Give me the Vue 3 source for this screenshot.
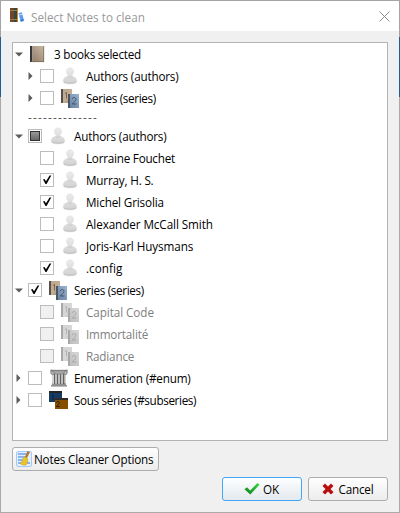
<script setup>
const rows = [
  { text: '3 books selected', level: 0, arrow: 'down', icon: 'book', fit: -0.24 },
  { text: 'Authors (authors)', level: 1, arrow: 'right', check: 'off', icon: 'person' },
  { text: 'Series (series)', level: 1, arrow: 'right', check: 'off', icon: 'series', fit: -0.32 },
  { text: '--------------', separator: true },
  { text: 'Authors (authors)', level: 0, arrow: 'down', check: 'partial', icon: 'person' },
  { text: 'Lorraine Fouchet', level: 1, check: 'off', icon: 'person', fit: -0.23 },
  { text: 'Murray, H. S.', level: 1, check: 'on', icon: 'person' },
  { text: 'Michel Grisolia', level: 1, check: 'on', icon: 'person', fit: -0.14 },
  { text: 'Alexander McCall Smith', level: 1, check: 'off', icon: 'person', fit: -0.08 },
  { text: 'Joris-Karl Huysmans', level: 1, check: 'off', icon: 'person', fit: -0.09 },
  { text: '.config', level: 1, check: 'on', icon: 'person', fit: 0.05 },
  { text: 'Series (series)', level: 0, arrow: 'down', check: 'on', icon: 'series', fit: -0.32 },
  { text: 'Capital Code', level: 1, check: 'off', icon: 'series', disabled: true, fit: -0.07 },
  { text: 'Immortalité', level: 1, check: 'off', icon: 'series', disabled: true },
  { text: 'Radiance', level: 1, check: 'off', icon: 'series', disabled: true },
  { text: 'Enumeration (#enum)', level: 0, arrow: 'right', check: 'off', icon: 'column' },
  { text: 'Sous séries (#subseries)', level: 0, arrow: 'right', check: 'off', icon: 'sub', fit: -0.35 },
]
</script>

<template>
  <div class="window">
    <svg class="defs" width="0" height="0">
      <defs>
        <linearGradient id="gPerson" x1="0" y1="0" x2="0" y2="1"><stop offset="0" stop-color="#ececec" /><stop offset="1" stop-color="#d0d0d0" /></linearGradient>
        <linearGradient id="gBook" x1="0" y1="1" x2="1" y2="0"><stop offset="0" stop-color="#8b7866" /><stop offset="1" stop-color="#c9b8a2" /></linearGradient>
        <linearGradient id="gTan" x1="0" y1="0" x2="1" y2="1"><stop offset="0" stop-color="#b9a48d" /><stop offset=".6" stop-color="#c4ae95" /><stop offset="1" stop-color="#8d7a68" /></linearGradient>
        <linearGradient id="gBlue" x1="0" y1="1" x2="1" y2="0"><stop offset="0" stop-color="#627d9c" /><stop offset="1" stop-color="#9bb3cd" /></linearGradient>
        <linearGradient id="gCheck" x1="0" y1="1" x2="1" y2="0"><stop offset="0" stop-color="#117a21" /><stop offset="1" stop-color="#35dd3c" /></linearGradient>
      </defs>
    </svg>

    <header class="titlebar">
      <svg class="logo" width="16" height="16" viewBox="0 0 16 16">
        <path d="M1 1h4v14H1z" fill="#70462d" /><path d="M1 3.500h4M1 12.500h4" stroke="#a9763c" />
        <path d="M5 1h4v14H5z" fill="#344944" /><path d="M5 3.500h3M5 12.500h3" stroke="#8f855e" /><path d="M8.500 1v14" stroke="#d68222" />
        <path d="M9.500 6.200l3.300-.9 2.400 8.700-3.500.9z" fill="#5c9df0" /><path d="M10.300 8l2.700-.7" stroke="#d5e8ff" /><path d="M11.700 13.500l2.700-.7" stroke="#235fac" />
      </svg>
      <h1>Select Notes to clean</h1>
      <svg class="close" width="11" height="11" viewBox="0 0 11 11"><path d="M.5.5l10 10M10.500.5l-10 10" stroke="#8c8c8c" /></svg>
    </header>

    <main class="content">
      <div class="tree">
        <div v-for="(r, i) in rows" :key="i" class="row" :class="{ child: r.level === 1, disabled: r.disabled, separator: r.separator }">
          <template v-if="!r.separator">
            <span class="twisty">
              <svg v-if="r.arrow === 'down'" width="8" height="5" viewBox="0 0 8 5"><path d="M0 .5h8L4 4.500z" fill="#5c5c5c" /></svg>
              <svg v-else-if="r.arrow" width="5" height="8" viewBox="0 0 5 8"><path d="M.5 0v8L4.500 4z" fill="#5c5c5c" /></svg>
            </span>
            <span v-if="r.check" class="box">
              <svg v-if="r.check === 'on'" width="12" height="12" viewBox="0 0 12 12"><path d="M2 5.500l1.500-.4L5 7.300 8.600 1.500h1.700L5.600 10H4.500z" fill="#050505" /></svg>
              <i v-else-if="r.check === 'partial'" />
            </span>
            <span class="icon" :class="r.icon">
              <svg v-if="r.icon === 'person'" width="18" height="18" viewBox="0 0 18 18">
                <path d="M2.300 14.500c0-3.500 1.700-4.700 4.800-5.100V8.100C5.900 7 5.500 5.400 5.600 4 5.700 2.100 7.100.9 9 .9s3.300 1.200 3.400 3.100c.1 1.400-.3 3-1.500 4.100v1.300c3.100.4 4.800 1.600 4.800 5.100 0 1.600-3 2.400-6.700 2.400s-6.700-.8-6.700-2.400z" fill="url(#gPerson)" stroke="#d6d6d6" stroke-width=".5" />
                <path d="M6.500 9.500c1.500 1.100 3.500 1.100 5 0" fill="none" stroke="#c7c7c7" stroke-width=".9" /><path d="M3 15c2.500 1.600 9.500 1.600 12 0" fill="none" stroke="#bdbdbd" stroke-width=".8" />
              </svg>
              <svg v-else-if="r.icon === 'book'" width="18" height="18" viewBox="0 0 18 18">
                <path d="M2 1h14v16H2z" fill="url(#gBook)" /><path d="M2 1h2v16H2z" fill="#33353a" /><path d="M4.500 1v16" stroke="#a79b89" stroke-width=".7" /><path d="M3 16.600h13M15.700 1v16" stroke="#74634f" stroke-width=".7" />
              </svg>
              <svg v-else-if="r.icon === 'series'" width="18" height="19" viewBox="0 0 18 19">
                <path d="M0 0h11v14H0z" fill="url(#gTan)" /><path d="M0 0h2v14H0z" fill="#55504a" /><path d="M4 4.500l1.500-1v6" fill="none" stroke="#796652" />
                <path d="M7 5h11v14H7z" fill="url(#gBlue)" /><path d="M7 5h2v14H7z" fill="#4a5664" />
                <path d="M11.300 10.300c.2-2.500 3.700-2.300 3.600 0 0 1.700-2.200 2.700-3.500 4.700h4" fill="none" stroke="#3e5167" />
              </svg>
              <svg v-else-if="r.icon === 'column'" width="20" height="18" viewBox="0 0 20 18">
                <path d="M1.500.8h17l.5 2.200-2.500 3v8.500l1.500 2.500H2l1.500-2.500V6L1 3z" fill="#aaa" /><path d="M1.500 1.200c4 .8 13 .8 17 0M3 15h14M2 17h16" fill="none" stroke="#777" />
                <path d="M5.500 5v10M8.500 5v10M11.500 5v10M14.500 5v10" stroke="#606060" /><path d="M4.500 6v9M7 5v10M10 5v10M13 5v10" stroke="#d5d5d5" /><circle cx="3.500" cy="4" r="1.600" fill="#bbb" stroke="#777" stroke-width=".7" /><circle cx="16.500" cy="4" r="1.600" fill="#bbb" stroke="#777" stroke-width=".7" />
                <path d="M5 4c3 1.500 7 1.500 10 0" fill="none" stroke="#858585" />
              </svg>
              <svg v-else width="19" height="18" viewBox="0 0 19 18">
                <path d="M0 0h13v11H0z" fill="#153b63" /><path d="M0 0h13v2H0z" fill="#252525" /><path d="M3 4.500l1-.5v5" fill="none" stroke="#071c35" />
                <path d="M6 7h13v11H6z" fill="#865000" /><path d="M6 7h13v2H6z" fill="#302b24" /><path d="M7.500 11.700c.2-1.700 3-1.500 2.900.1 0 1.200-1.900 2.400-2.900 3.700h3.400" fill="none" stroke="#291b07" />
              </svg>
            </span>
          </template>
          <span class="label" :style="r.fit ? { letterSpacing: r.fit + 'px' } : null">{{ r.text }}</span>
        </div>
      </div>

      <button class="btn options">
        <svg width="16" height="16" viewBox="0 0 16 16"><rect x=".5" y=".5" width="15" height="15" rx="1.500" fill="#e3effd" stroke="#a7c8f5" /><path d="M2 3h10M2 6h9M2 9h5M2 12h4M11 12h3" stroke="#69a4ea" stroke-width="1.500" /><path d="M11.500 0L14 1l-3 6-2-1z" fill="#b97731" /><path d="M8 5.500l3.500 2c.5 2.500 0 4.500-1.500 6.500-2 .5-4 0-6-1.500C6.500 11 6.500 8 8 5.500z" fill="#e9c529" stroke="#c39b18" stroke-width=".5" /></svg>
        <span>Notes Cleaner Options</span>
      </button>

      <footer class="actions">
        <button class="btn ok">
          <svg width="16" height="14" viewBox="0 0 16 14"><path d="M.5 7.300L3 5.200l3.200 3.300L13.500 1l2 1.800L6.300 12.500z" fill="url(#gCheck)" /></svg>
          <span>OK</span>
        </button>
        <button class="btn cancel">
          <svg width="12" height="12" viewBox="0 0 12 12"><path d="M3 .5l3 3 3-3L11.500 3l-3 3 3 3L9 11.500l-3-3-3 3L.5 9l3-3-3-3z" fill="#b90f0f" /></svg>
          <span>Cancel</span>
        </button>
      </footer>
    </main>
  </div>
</template>

<style>
body { margin: 0; background: #fff; }
</style>

<style scoped>
* { box-sizing: border-box; }
.window { width: 400px; height: 513px; display: flex; flex-direction: column; border: 1px solid #a9a9a9; border-image: linear-gradient(#a5a5a5 0 37px, #1d6093 37px 97px, #a9a9a9 97px) 1; background: #f0f0f0; font: 11.7px/16px "Open Sans", "Noto Sans", sans-serif; color: #000; letter-spacing: -.18px; }
.defs { position: absolute; }
.titlebar { height: 30px; flex: none; display: flex; align-items: center; padding: 0 9px 0 8px; background: #fff; }
.logo { margin-bottom: 3px; }
h1 { flex: 1; margin: 1px 0 0 6px; font-size: 11.700px; font-weight: 400; line-height: 16px; color: #999; letter-spacing: .02px; }
.content { flex: 1; display: flex; flex-direction: column; padding: 11px 11px 0; }
.tree { height: 399px; flex: none; border: 1px solid #b4b4b4; background: #fff; }
.row { height: 22px; display: flex; align-items: center; white-space: pre; }
.child { padding-left: 12px; }
.twisty { width: 11px; margin-right: 4px; display: flex; justify-content: center; }
.box { width: 14px; height: 14px; margin-right: 7px; flex: none; display: flex; align-items: center; justify-content: center; border: 1px solid #bcbcbc; background: #fff; }
.box i { width: 10px; height: 10px; border: 1px solid #333; background: linear-gradient(#999, #686868); }
.box svg { flex: none; }
.icon { width: 18px; height: 18px; margin-right: 7px; flex: none; display: flex; align-items: center; }
.icon.book { margin-right: 8px; }
.icon svg { flex: none; }
.disabled { color: #808080; }
.disabled .box { background: #f0f0f0; }
.disabled .icon { filter: grayscale(1); opacity: .5; }
.separator { height: 16px; padding-left: 15px; letter-spacing: 1.230px; color: #555; }
.btn { display: flex; align-items: center; height: 24px; padding: 0; border: 1px solid #adadad; border-radius: 3px; background: linear-gradient(#fefefe, #ececec); font: inherit; color: #000; letter-spacing: inherit; white-space: nowrap; }
.options { width: 147px; margin-top: 6px; padding-left: 3px; gap: 2px; }
.actions { display: flex; justify-content: flex-end; gap: 6px; margin-top: 6px; }
.ok, .cancel { width: 80px; justify-content: center; gap: 4px; }
.ok { padding-right: 1px; gap: 3px; border-color: #42a5f5; background: linear-gradient(#fdfeff, #e3e9ee); }
</style>
